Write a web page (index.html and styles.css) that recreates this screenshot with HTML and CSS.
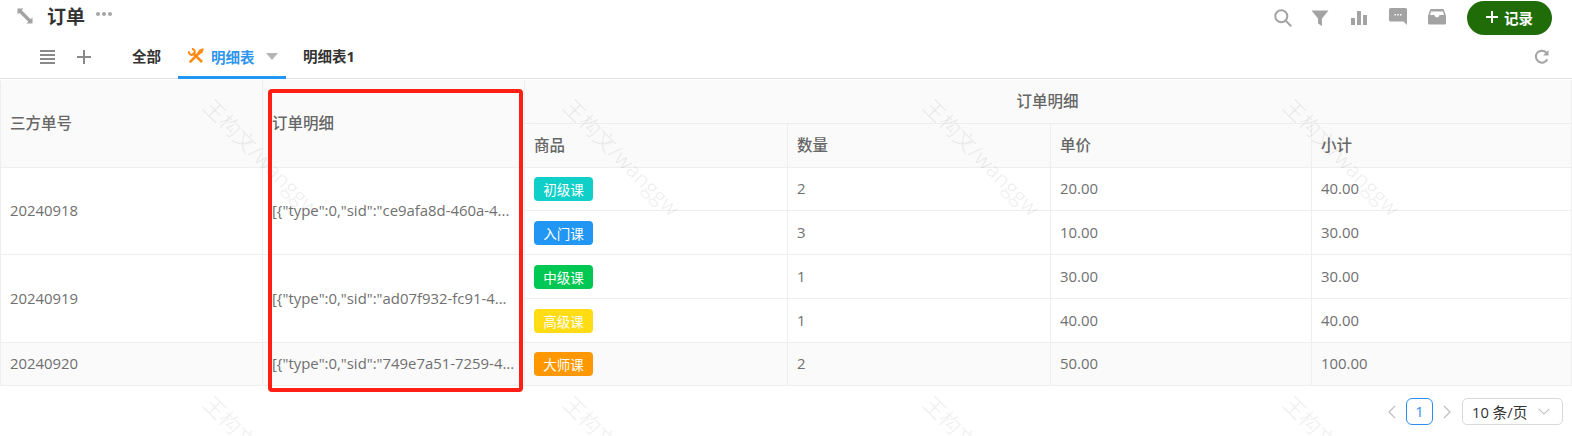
FILE: index.html
```html
<!DOCTYPE html>
<html lang="zh">
<head>
<meta charset="utf-8">
<title>订单</title>
<link rel="stylesheet" href="styles.css">
</head>
<body>
<div class="page">
  <header class="topbar">
    <div class="title-group">
      <svg class="ico-expand" viewBox="0 0 16 16"><path d="M.5.500h6L4.700 2.300l9 9L15.500 9.500v6h-6l1.800-1.800-9-9L.5 6.500z"/></svg>
      <h1 class="title">订单</h1>
      <span class="dots"><i></i><i></i><i></i></span>
    </div>
    <div class="actions">
      <svg class="act act-search" viewBox="0 0 18 18"><circle cx="7.300" cy="7.300" r="6" class="ln"/><path d="M11.800 11.800l5.400 5.400" class="ln"/></svg>
      <svg class="act" viewBox="0 0 18 18"><path d="M.5 1.500h17L11 9.500V17l-4-2.500v-5z"/></svg>
      <svg class="act" viewBox="0 0 18 18"><path d="M1 9h4v7H1zM7 2h4v14H7zM13 6h4v10h-4z"/></svg>
      <svg class="act act-up" viewBox="0 0 18 18"><path d="M1.500 0h15A1.500 1.500 0 0 1 18 1.500V17l-3.500-3.500h-13A1.500 1.500 0 0 1 0 12V1.500A1.500 1.500 0 0 1 1.500 0z"/><path class="cut" d="M5.500 6h1.500v1.500H5.500zM8.300 6h1.500v1.500H8.300zM11 6h1.500v1.500H11z"/></svg>
      <svg class="act act-up" viewBox="0 0 18 18"><path d="M3.500 1h11A1.500 1.500 0 0 1 16 2l2 6v7a1.500 1.500 0 0 1-1.500 1.500h-15A1.500 1.500 0 0 1 0 15V8l2-6a1.500 1.500 0 0 1 1.500-1zM3 3.500 2 7h4.500a2.500 2.500 0 0 0 5 0H16l-1-3.500z" fill-rule="evenodd"/></svg>
      <button class="record"><span class="plus-w"></span>记录</button>
    </div>
  </header>

  <nav class="tabbar">
    <div class="tab-tools">
      <span class="hamburger"><i></i><i></i><i></i><i></i></span>
      <span class="plus"></span>
    </div>
    <a class="tab tab-all">全部</a>
    <a class="tab tab-active">
      <svg class="wrench" viewBox="0 0 16 16"><path class="o1" d="M4.800 4.800 14 14"/><path class="o3" d="M.9 3.200A3 3 0 1 0 4 .9"/><path class="o1" d="M1.700 14.300 10 6"/><path class="o2" d="M8.800 5.200 11.500 1.500 15 .2 15.800 1l-1.300 3.500-3.700 2.700z"/></svg>
      <span>明细表</span>
      <span class="caret"></span>
    </a>
    <a class="tab tab-last">明细表1</a>
    <svg class="refresh" viewBox="0 0 16 16"><path d="M13.300 10.200A6 6 0 1 1 12.400 3.700" class="rf"/><path d="M14.500 1v5.500H9z" class="rf-f"/></svg>
  </nav>

  <table class="grid">
    <colgroup>
      <col class="c1"><col class="c2"><col class="c3"><col class="c4"><col class="c5"><col class="c6">
    </colgroup>
    <thead>
      <tr class="h44">
        <th rowspan="2">三方单号</th>
        <th rowspan="2">订单明细</th>
        <th colspan="4" class="center">订单明细</th>
      </tr>
      <tr class="h44">
        <th>商品</th><th>数量</th><th>单价</th><th>小计</th>
      </tr>
    </thead>
    <tbody>
      <tr class="h43">
        <td rowspan="2">20240918</td>
        <td rowspan="2" class="json">[{"type":0,"sid":"ce9afa8d-460a-4...</td>
        <td><span class="tag teal">初级课</span></td><td>2</td><td>20.00</td><td>40.00</td>
      </tr>
      <tr class="h44">
        <td><span class="tag blue">入门课</span></td><td>3</td><td>10.00</td><td>30.00</td>
      </tr>
      <tr class="h44">
        <td rowspan="2">20240919</td>
        <td rowspan="2" class="json">[{"type":0,"sid":"ad07f932-fc91-4...</td>
        <td><span class="tag green">中级课</span></td><td>1</td><td>30.00</td><td>30.00</td>
      </tr>
      <tr class="h44">
        <td><span class="tag yellow">高级课</span></td><td>1</td><td>40.00</td><td>40.00</td>
      </tr>
      <tr class="h43 striped">
        <td>20240920</td>
        <td class="json">[{"type":0,"sid":"749e7a51-7259-4...</td>
        <td><span class="tag orange">大师课</span></td><td>2</td><td>50.00</td><td>100.00</td>
      </tr>
    </tbody>
  </table>

  <footer class="pager">
    <svg class="chev" viewBox="0 0 8 14"><path d="M7 1 1 7l6 6"/></svg>
    <span class="page-num">1</span>
    <svg class="chev" viewBox="0 0 8 14"><path d="m1 1 6 6-6 6"/></svg>
    <span class="size">10 条/页<svg class="size-chev" viewBox="0 0 14 8"><path d="m1 1 6 6 6-6"/></svg></span>
  </footer>

  <div class="watermarks">
    <span>王构文/wanggw</span><span>王构文/wanggw</span><span>王构文/wanggw</span><span>王构文/wanggw</span>
    <span>王构文/wanggw</span><span>王构文/wanggw</span><span>王构文/wanggw</span><span>王构文/wanggw</span>
  </div>
  <div class="callout"></div>
</div>
</body>
</html>
```

FILE: styles.css
```css
* { box-sizing: border-box; }
html, body { margin: 0; padding: 0; background: #fff; }
.page {
  position: relative;
  width: 1572px;
  height: 436px;
  overflow: hidden;
  font-family: "Open Sans", "Noto Sans CJK SC", sans-serif;
  color: #666;
}

/* top bar */
.topbar {
  display: flex;
  justify-content: space-between;
  align-items: center;
  height: 36px;
  padding: 0 20px 0 17px;
}
.title-group { display: flex; align-items: center; padding-bottom: 5px; }
.ico-expand { width: 16px; height: 16px; fill: #a3a3a3; }
.title {
  margin: 0 0 0 14px;
  font-size: 19px;
  font-weight: 700;
  line-height: 30px;
  color: #333;
  font-family: "Noto Sans CJK SC", sans-serif;
}
.dots { display: flex; gap: 2px; margin: -3px 0 0 11px; }
.dots i { width: 4px; height: 4px; border-radius: 50%; background: #a6a6a6; }
.actions { display: flex; align-items: center; gap: 21px; }
.act { width: 18px; height: 18px; fill: #a3a3a3; }
.act-up { margin-top: -3px; }
.act-search { margin-right: -1px; transform: translateX(1px); }
.act .ln { fill: none; stroke: #a3a3a3; stroke-width: 2; }
.act .cut { fill: #fff; }
.record {
  display: flex;
  align-items: center;
  justify-content: center;
  gap: 6px;
  width: 85px;
  height: 34px;
  border: 0;
  border-radius: 17px;
  background: #206c08;
  color: #fff;
  font-family: "Noto Sans CJK SC", sans-serif;
  font-size: 14.500px;
  font-weight: 700;
  padding: 0 0 2px;
}
.plus-w { position: relative; width: 12px; height: 12px; }
.plus-w::before, .plus-w::after, .plus::before, .plus::after { content: ""; position: absolute; background: currentColor; }
.plus-w::before { left: 0; right: 0; top: 5px; height: 2px; }
.plus-w::after { top: 0; bottom: 0; left: 5px; width: 2px; }

/* tabs */
.tabbar {
  display: flex;
  align-items: stretch;
  height: 43px;
  padding-left: 40px;
  border-bottom: 1px solid #e0e0e0;
  font-family: "Noto Sans CJK SC", sans-serif;
  font-size: 14.500px;
  font-weight: 700;
  color: #333;
}
.tab-tools { display: flex; align-items: center; gap: 22px; width: 92px; }
.hamburger { display: flex; flex-direction: column; gap: 2px; width: 15px; }
.hamburger i { height: 2px; background: #8a8a8a; }
.plus { position: relative; width: 14px; height: 14px; color: #8a8a8a; }
.plus::before { left: 0; right: 0; top: 6px; height: 2px; }
.plus::after { top: 0; bottom: 0; left: 6px; width: 2px; }
.tab { display: flex; align-items: center; padding-bottom: 3px; }
.tab-all { width: 46px; }
.tab-active {
  gap: 7px;
  width: 108px;
  padding: 0 0 0 10px;
  color: #2f96ee;
  border-bottom: 3px solid #2196f3;
  margin-bottom: -1px;
}
.wrench { width: 16px; height: 16px; }
.wrench .o1 { fill: none; stroke: #ff8a14; stroke-width: 2.600; }
.wrench .o2 { fill: #ff8a14; }
.wrench .o3 { fill: none; stroke: #ff8a14; stroke-width: 2; }
.caret {
  width: 0; height: 0;
  margin-left: 4px;
  border-left: 6px solid transparent;
  border-right: 6px solid transparent;
  border-top: 7px solid #b5b5b5;
}
.tab-last { margin-left: 17px; font-family: "Open Sans", "Noto Sans CJK SC", sans-serif; }
.refresh { width: 16px; height: 16px; margin: 13px 22px 0 auto; }
.refresh .rf { fill: none; stroke: #a3a3a3; stroke-width: 2; }
.refresh .rf-f { fill: #a3a3a3; }

/* table */
.grid {
  width: 1572px;
  margin-top: 1px;
  table-layout: fixed;
  border-collapse: separate;
  border-spacing: 0;
  border-left: 1px solid #eee;
  font-size: 14.900px;
  color: #707070;
}
.c1 { width: 262px; }
.c2 { width: 262px; }
.c3 { width: 263px; }
.c4 { width: 263px; }
.c5 { width: 261px; }
.c6 { width: 260px; }
.h44 { height: 44px; }
.h43 { height: 43px; }
.grid th, .grid td {
  padding: 0 10px 2px 9px;
  border-right: 1px solid #eee;
  border-bottom: 1px solid #eee;
  white-space: nowrap;
  overflow: hidden;
  text-align: left;
  vertical-align: middle;
}
.grid th {
  background: #fafafa;
  font-family: "Noto Sans CJK SC", sans-serif;
  font-size: 15.500px;
  font-weight: 500;
  color: #666;
  padding-bottom: 3px;
}
.grid th:first-child { border-top-left-radius: 6px; }
.grid th.center { text-align: center; }
.striped td { background: #fafafa; }
.tag {
  display: block;
  width: 59px;
  height: 24px;
  margin-bottom: -2px;
  border-radius: 4px;
  color: #fff;
  font-family: "Noto Sans CJK SC", sans-serif;
  font-size: 13.500px;
  line-height: 24px;
  text-align: center;
}
.teal { background: #0fcfc8; }
.blue { background: #2196f3; }
.green { background: #00c853; }
.yellow { background: #ffdc14; }
.orange { background: #ff9800; }

/* pagination */
.pager {
  display: flex;
  justify-content: flex-end;
  align-items: center;
  height: 27px;
  margin-top: 12px;
  padding-right: 9px;
}
.chev { width: 8px; height: 14px; fill: none; stroke: #bdbdbd; stroke-width: 1.200; }
.page-num {
  width: 27px;
  height: 27px;
  margin: 0 10px;
  border: 1px solid #2d8cf0;
  border-radius: 6px;
  color: #2d8cf0;
  font-size: 14.700px;
  line-height: 25px;
  text-align: center;
}
.size {
  display: flex;
  align-items: center;
  justify-content: space-between;
  width: 101px;
  height: 27px;
  margin-left: 11px;
  padding: 0 12px 0 9px;
  border: 1px solid #d9d9d9;
  border-radius: 5px;
  color: #333;
  font-size: 14.700px;
}
.size-chev { width: 12px; height: 7px; fill: none; stroke: #bdbdbd; stroke-width: 1.200; }

/* overlays */
.watermarks {
  position: absolute;
  left: 209px;
  top: 101px;
  display: grid;
  grid-template-columns: repeat(4, 360px);
  grid-auto-rows: 297px;
  pointer-events: none;
}
.watermarks span {
  width: 160px;
  height: 28px;
  font-family: "Open Sans", "Noto Sans CJK SC", sans-serif;
  font-size: 21.500px;
  line-height: 28px;
  white-space: nowrap;
  color: rgba(0, 0, 0, .065);
  transform-origin: 0 0;
  transform: translate(8px, -8px) rotate(45deg);
}
.callout {
  position: absolute;
  left: 268px;
  top: 89px;
  width: 255px;
  height: 303px;
  border: 4px solid #ff1f14;
  border-radius: 4px;
  pointer-events: none;
}
```
